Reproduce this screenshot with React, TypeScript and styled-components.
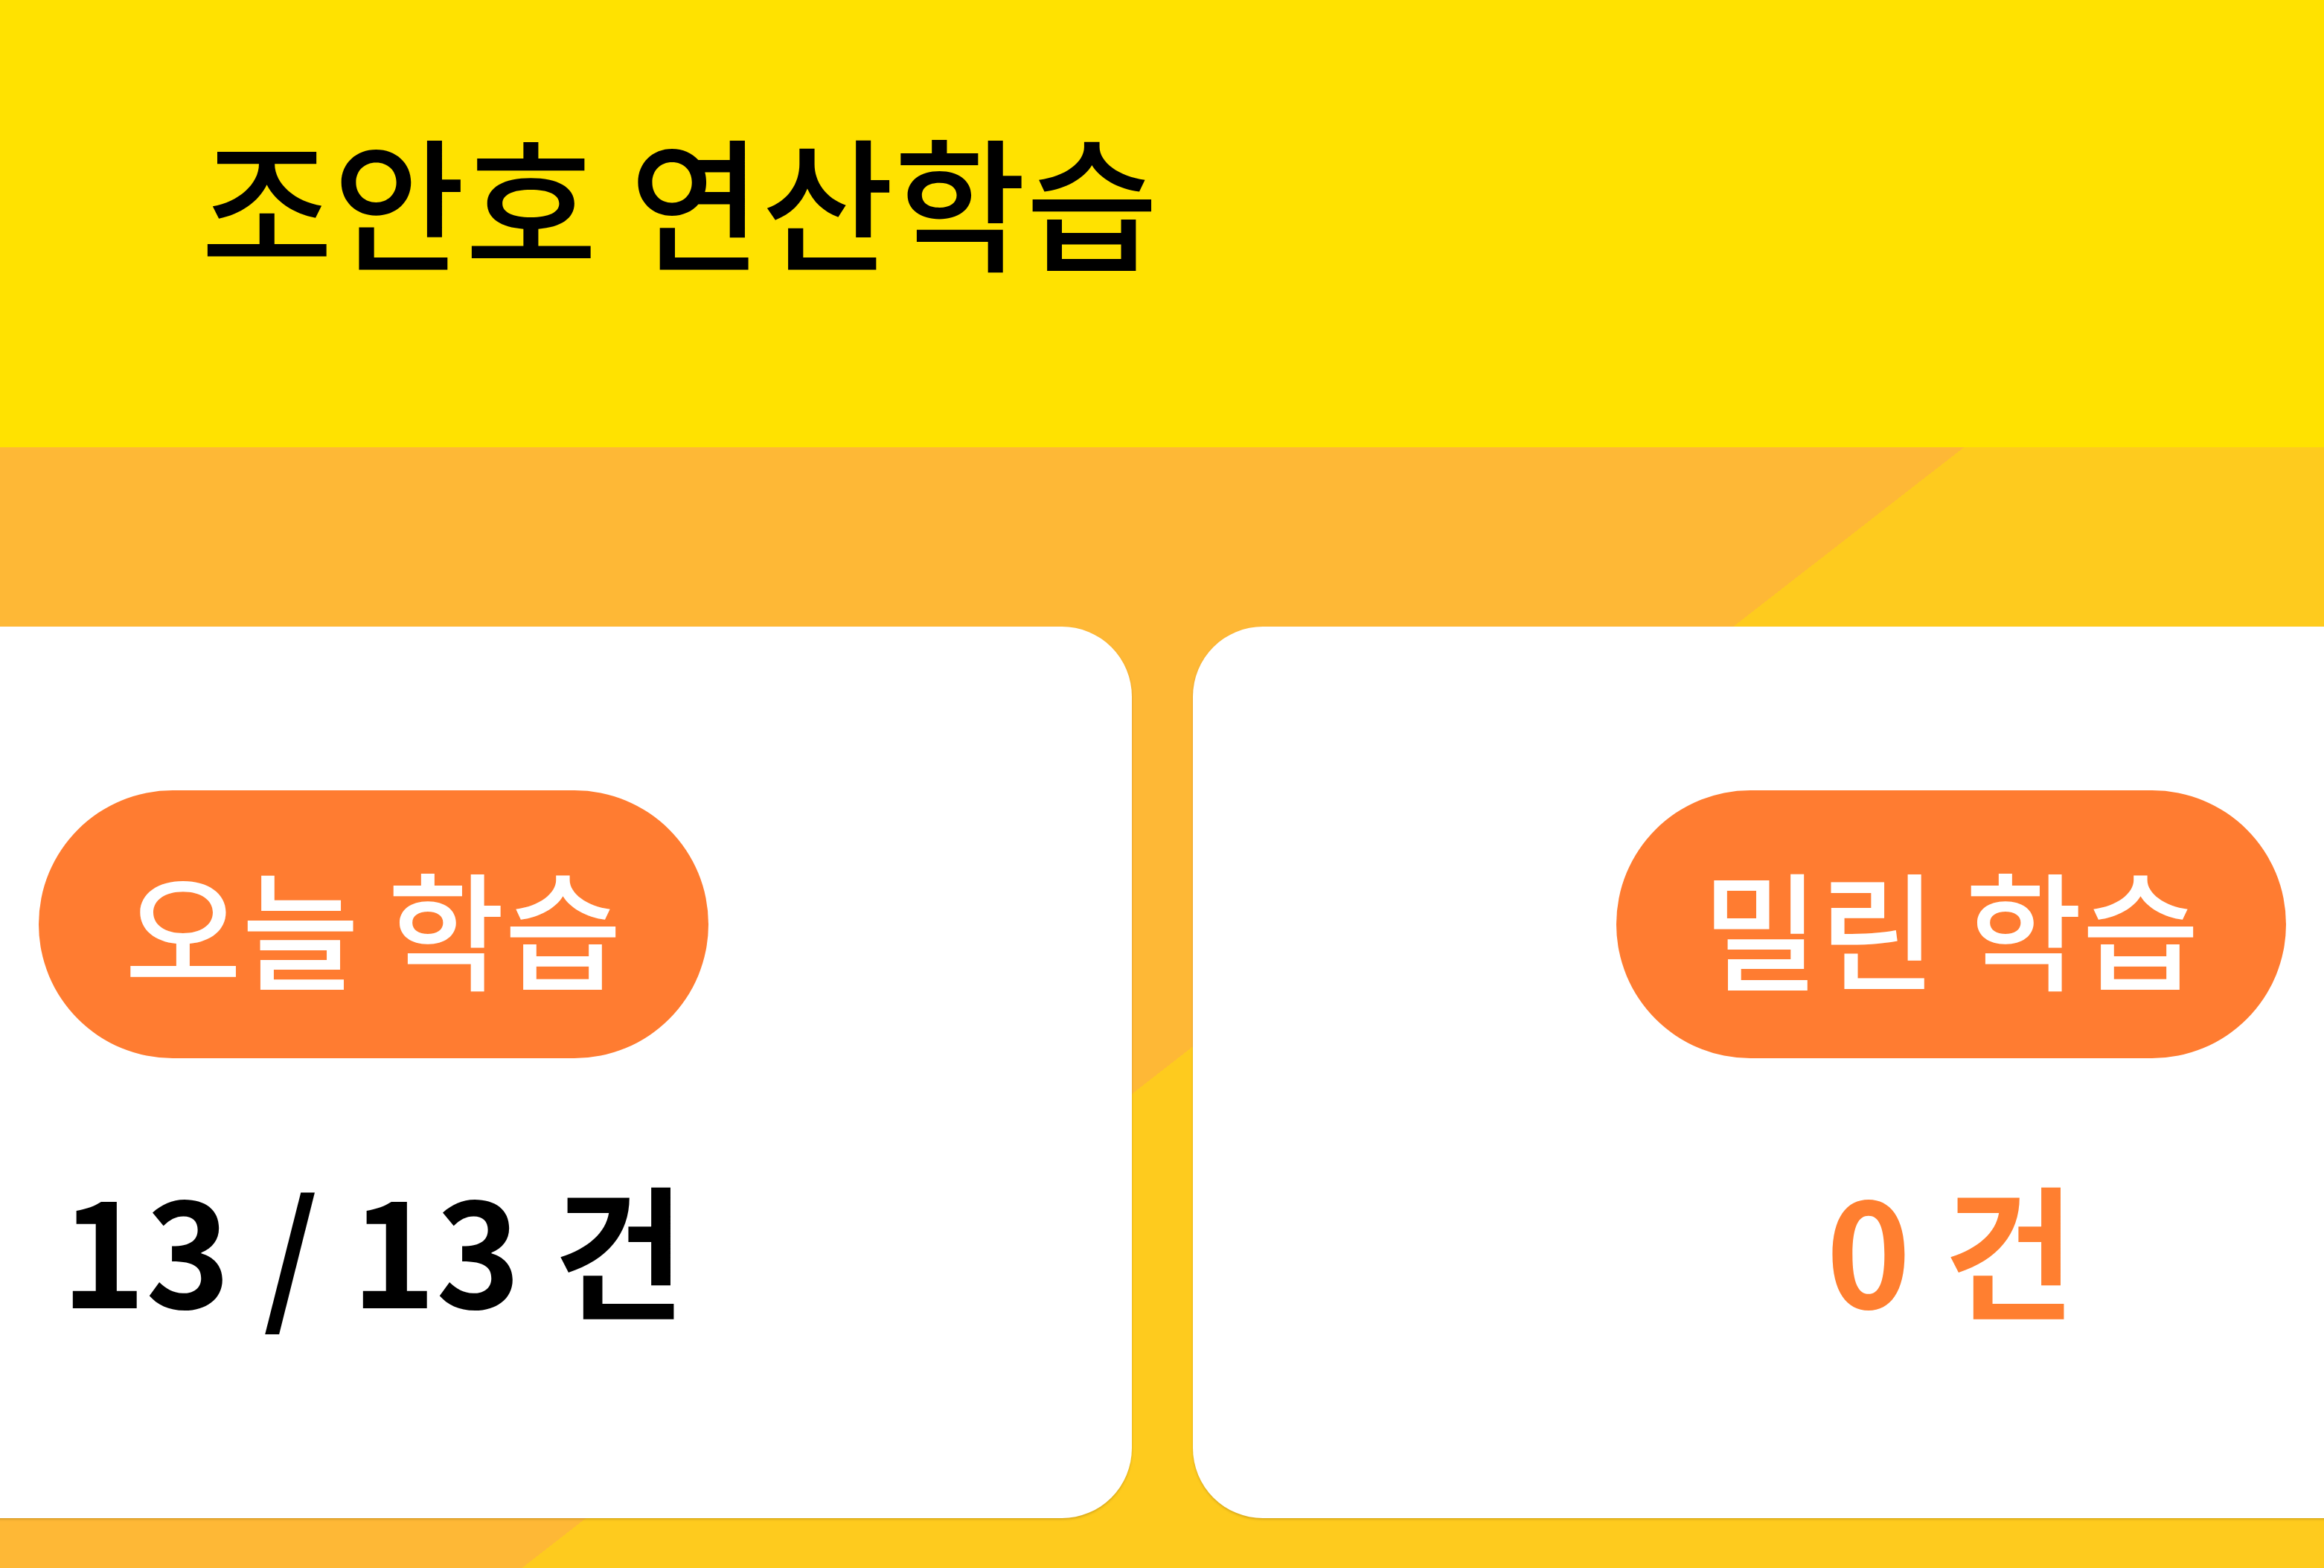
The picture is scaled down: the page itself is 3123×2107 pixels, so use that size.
import styled, { createGlobalStyle } from "styled-components";

const CARDS = [
  { label: "오늘 학습", count: "13 / 13 건", highlight: false },
  { label: "밀린 학습", count: "0 건", highlight: true },
];

const GlobalStyle = createGlobalStyle`
  html, body {
    margin: 0;
    padding: 0;
  }
  body {
    width: 3123px;
    height: 2107px;
    overflow: hidden;
    font-family: "Noto Sans CJK KR", "Noto Sans", sans-serif;
  }
`;

const App = () => {
  return (
    <>
      <GlobalStyle />
      <Page>
        <Header>
          <Title>조안호 연산학습</Title>
        </Header>
        <Main>
          <CardRow>
            {CARDS.map((c) => (
              <Card key={c.label}>
                <Pill>{c.label}</Pill>
                <Count $highlight={c.highlight}>{c.count}</Count>
              </Card>
            ))}
          </CardRow>
        </Main>
      </Page>
    </>
  );
};
export default App;

const Page = styled.div`
  display: flex;
  flex-direction: column;
  width: 3123px;
  height: 2107px;
  overflow: hidden;
`;

const Header = styled.header`
  box-sizing: border-box;
  height: 601px;
  padding: 170px 0 0 270px;
  background: #ffe200;
`;

const Title = styled.h1`
  margin: 0;
  font-size: 193px;
  font-weight: 500;
  line-height: 1;
  color: #000;
`;

// split background: orange wedge top-left, yellow bottom-right
const Main = styled.main`
  flex: 1;
  box-sizing: border-box;
  padding-top: 241px;
  background: linear-gradient(142.15deg, #feb836 52.15%, #fecb1e 52.15%);
`;

const CardRow = styled.div`
  display: flex;
  justify-content: center;
  gap: 82px;
`;

const Card = styled.section`
  flex: 0 0 2038px;
  height: 1198px;
  box-sizing: border-box;
  padding-top: 220px;
  display: flex;
  flex-direction: column;
  align-items: center;
  background: #fff;
  border-radius: 94px;
  box-shadow: 0 2px 3px rgba(150, 110, 30, 0.35);
`;

const Pill = styled.div`
  width: 900px;
  height: 360px;
  border-radius: 180px;
  display: flex;
  align-items: center;
  justify-content: center;
  background: #ff7c31;
  color: #fff;
  font-size: 171px;
  font-weight: 500;
  line-height: 1;
`;

const Count = styled.div<{ $highlight: boolean }>`
  margin-top: 156px;
  font-size: 193px;
  font-weight: 700;
  line-height: 1;
  color: ${(p) => (p.$highlight ? "#ff7f30" : "#000")};
`;
